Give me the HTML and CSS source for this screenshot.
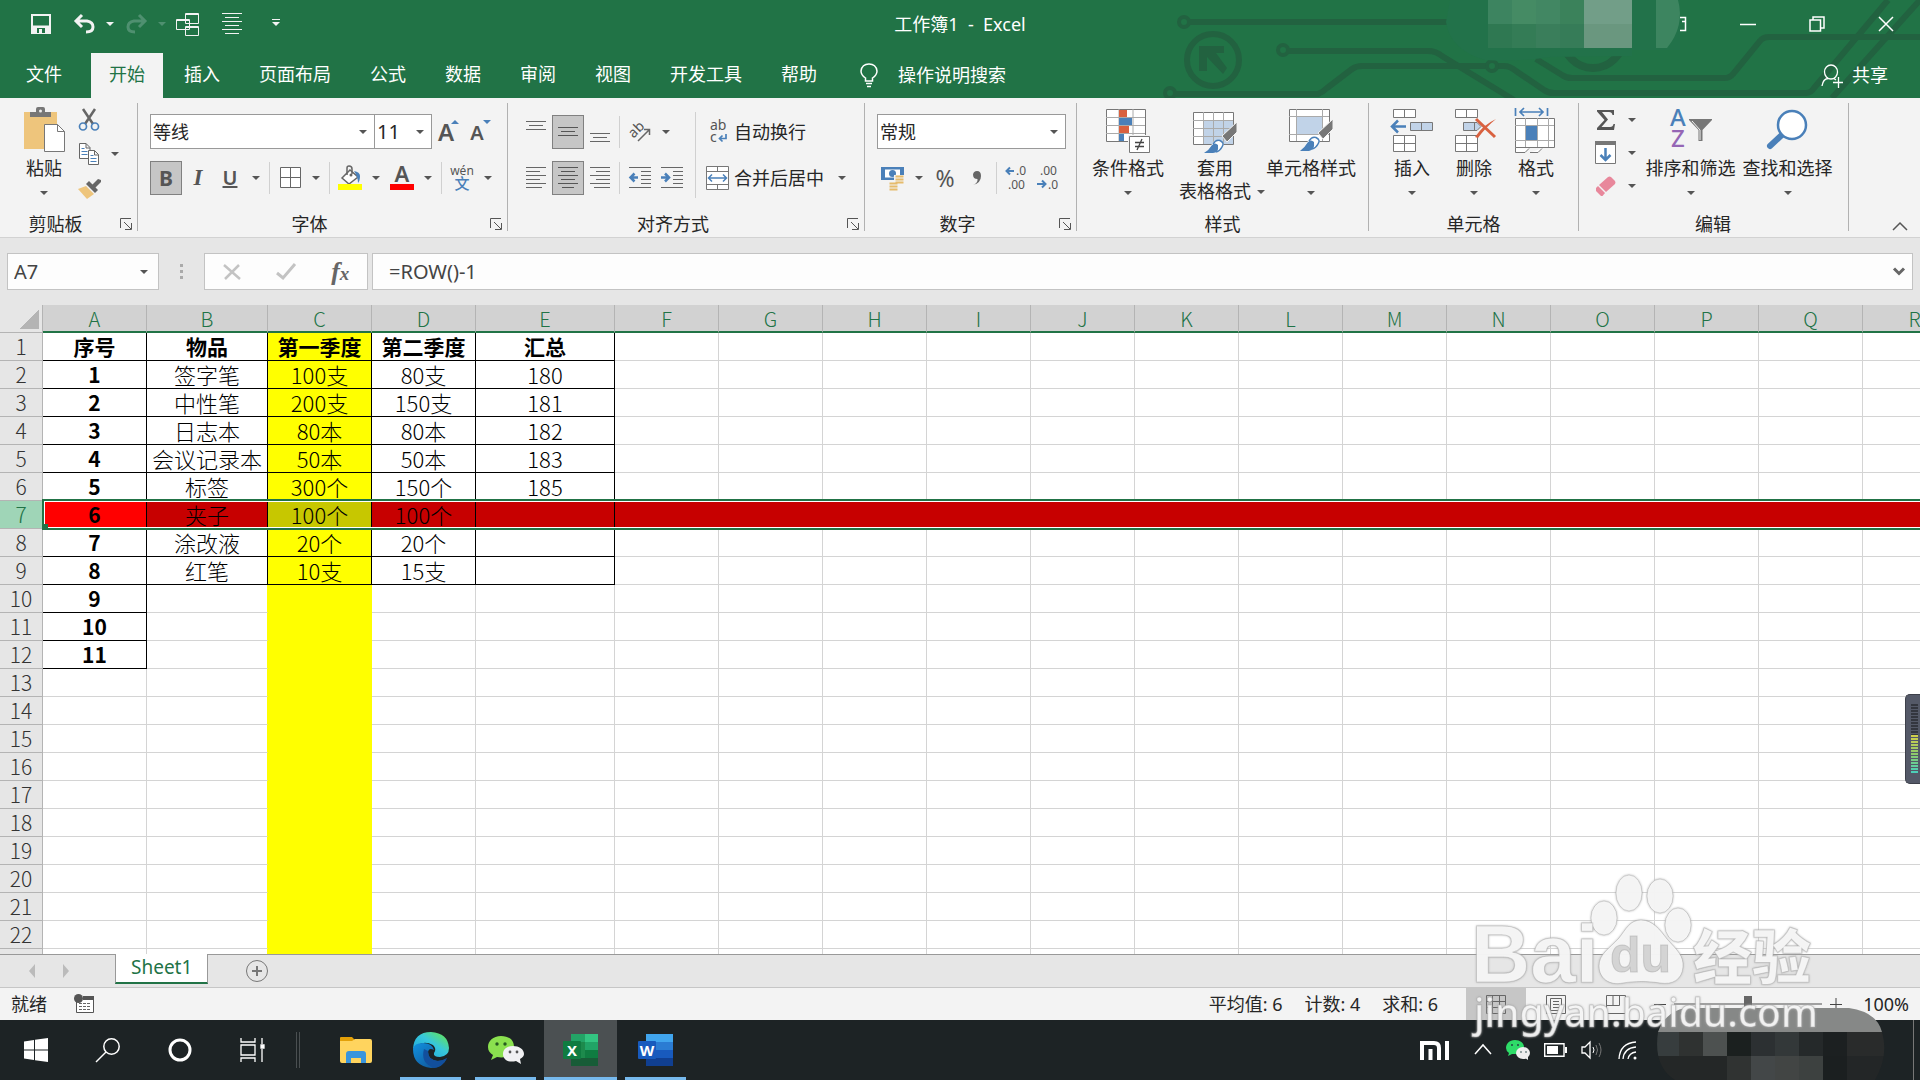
FILE: index.html
```html
<!DOCTYPE html>
<html lang="zh-CN">
    <head>
        <meta charset="utf-8">
        <meta name="viewport" content="width=device-width, initial-scale=1">
        <title>工作簿1 - Excel</title>
        <link rel="stylesheet" href="styles.css">
    </head>
    <body>
        <header class="app-header">
            <!--Circuit pattern in the right corner of the title bar-->
            <svg class="circuit" width="770" height="98" viewBox="0 0 770 98" aria-hidden="true">
                <g fill="none" stroke="#226240" stroke-width="6">
                    <circle cx="34" cy="22" r="5" stroke-width="4"/>
                    <path d="M40 22H300"/>
                    <circle cx="63" cy="60" r="26"/>
                    <circle cx="133" cy="50" r="5" stroke-width="4"/>
                    <path d="M139 51H278Q286 51 292 56L364 100"/>
                    <circle cx="20" cy="93" r="5" stroke-width="4"/>
                    <path d="M26 94H168Q173 92 177 88L202 69Q206 66 212 66H336M348 66H354Q360 66 366 71L394 90Q398 93 404 93H656Q661 93 664 88L738 0"/>
                    <circle cx="342" cy="66" r="5" stroke-width="4"/>
                    <circle cx="443" cy="38" r="30" stroke-width="8"/>
                    <path d="M386 59L412 75Q416 78 422 78H574Q580 78 583 74L610 41Q613 37 619 37H770M770 0L682 98"/>
                </g>
                <path fill="#226240" d="M49 46H74V53H66L77 68L73 74L57 57V71H49Z"/>
                <path fill="#22724a" d="M300 0H530V50H482V56L400 57Q370 62 335 60Q300 50 296 22Z"/>
                <path fill="#3d8460" d="M338 0h24v24h-24z"/><path fill="#458b64" d="M362 0h24v24h-24z"/>
                <path fill="#428763" d="M386 0h24v24h-24z"/><path fill="#3b825b" d="M410 0h24v24h-24z"/>
                <path fill="#729e88" d="M434 0h48v24h-48z"/><path fill="#2f7852" d="M338 24h24v24h-24z"/>
                <path fill="#347c56" d="M362 24h24v24h-24z"/><path fill="#3a7e5b" d="M386 24h24v24h-24z"/>
                <path fill="#367c58" d="M410 24h24v24h-24z"/><path fill="#6a977f" d="M434 24h48v24h-48z"/>
                <path fill="#3d8560" d="M506 0H528Q535 26 517 48H506z"/>
            </svg>

            <div class="title-bar">
                <div class="quick-access">
                    <button class="qa" aria-label="保存"><svg width="20" height="20" viewBox="0 0 20 20"><path d="M1 1H19V19H1Z" fill="none" stroke="#f3f3f3" stroke-width="2"/><path d="M2 11.500H18V18H2Z" fill="#f3f3f3"/><path d="M6 14h8v5H6z" fill="#217346"/><path d="M8 15h3v4H8z" fill="#f3f3f3"/></svg></button>
                    <button class="qa" aria-label="撤消"><svg width="23" height="20" viewBox="0 0 23 20" fill="none" stroke="#f3f3f3" stroke-width="3"><path d="M9 1L3 7L9 13M3 7H14Q20 8 20 13Q20 18 13 18"/></svg></button>
                    <button class="qa-more" aria-label="撤消列表"><i class="caret light"></i></button>
                    <button class="qa" aria-label="恢复" disabled><svg width="23" height="20" viewBox="0 0 23 20" fill="none" stroke="#4f9070" stroke-width="3"><path d="M14 1L20 7L14 13M20 7H9Q3 8 3 13Q3 18 10 18"/></svg></button>
                    <button class="qa-more" aria-label="恢复列表" disabled><i class="caret faint"></i></button>
                    <button class="qa" aria-label="切换窗口"><svg width="24" height="24" viewBox="0 0 24 24" fill="#217346" stroke="#f3f3f3"><path d="M9.500 1.500H22.500V11.500H9.500ZM9 2.500H23M.5 7.500H13.500V17.500H.5ZM0 8.500H14M9.500 14.500H22.500V23.500H9.500ZM9 15.500H23"/></svg></button>
                    <button class="qa wide" aria-label="居中"><svg width="20" height="22" viewBox="0 0 20 22" stroke="#f3f3f3"><path d="M0 .5H20M3 4.500H17M0 8.500H20M3 12.500H17M0 16.500H20M3 20.500H17"/></svg></button>
                    <button class="qa" aria-label="自定义快速访问工具栏"><i class="caret light barred"></i></button>
                </div>
                <h1 class="doc-title">工作簿1&nbsp; -&nbsp; Excel</h1>
                <div class="window-controls">
                    <button aria-label="功能区显示选项"><svg width="16" height="16" viewBox="0 0 16 16" fill="none" stroke="#fff" stroke-width="1.500"><path d="M9 1.500H14.500V14.500H9M11 5.500h3"/></svg></button>
                    <button aria-label="最小化"><svg width="16" height="16" viewBox="0 0 16 16" stroke="#fff" stroke-width="1.500"><path d="M0 8.500H16"/></svg></button>
                    <button aria-label="还原"><svg width="16" height="16" viewBox="0 0 16 16" fill="none" stroke="#fff" stroke-width="1.500"><path d="M1 4H11.500V15H1ZM4 4V1H15V12H12"/></svg></button>
                    <button aria-label="关闭"><svg width="16" height="16" viewBox="0 0 16 16" stroke="#fff" stroke-width="1.500"><path d="M1 1L15 15M15 1L1 15"/></svg></button>
                </div>
            </div>

            <nav class="tabs">
                <a href="#" class="tab file">文件</a>
                <a href="#" class="tab active">开始</a>
                <a href="#" class="tab">插入</a>
                <a href="#" class="tab">页面布局</a>
                <a href="#" class="tab">公式</a>
                <a href="#" class="tab">数据</a>
                <a href="#" class="tab">审阅</a>
                <a href="#" class="tab">视图</a>
                <a href="#" class="tab">开发工具</a>
                <a href="#" class="tab">帮助</a>
                <a href="#" class="tell-me"><svg width="18" height="25" viewBox="0 0 18 25" fill="none" stroke="#fff" stroke-width="1.500"><path d="M5.500 18V15Q1 12 1 8Q2 1 9 1Q16 1 17 8Q17 12 12.500 15V18ZM6 20.500h6M7 23.500h4"/></svg>操作说明搜索</a>
                <a href="#" class="share"><svg width="22" height="24" viewBox="0 0 22 24" fill="none" stroke="#fff" stroke-width="1.300"><ellipse cx="10" cy="8" rx="6.500" ry="7"/><path d="M1 22Q2 15 7 14.500M13 14.500L15 16M17.500 13V24M12 18.500H22"/></svg>共享</a>
            </nav>
        </header>

        <section class="ribbon">
            <div class="group clipboard">
                <div class="group-body">
                    <button class="big">
                        <svg width="44" height="48" viewBox="0 0 44 48"><path d="M2 7h33v37H2z" fill="#eec57c"/><path d="M8 12V7h6V4q0-2 2-2h5q2 0 2 2v3h6v5z" fill="#777"/><circle cx="18.500" cy="6" r="1.500" fill="#eee"/><path d="M22.500 19.500H35.500L42.500 26.500V46.500H22.500Z" fill="#fff" stroke="#777"/><path d="M35.500 19.500V26.500H42.500" fill="none" stroke="#777"/></svg>
                        <span>粘贴</span><i class="caret"></i>
                    </button>
                    <div class="stack">
                        <div><button class="tool" aria-label="剪切"><svg width="20" height="22" viewBox="0 0 20 22" fill="none"><path d="M4 0L14 15M16 0L6 15" stroke="#666" stroke-width="2.500"/><circle cx="4" cy="17.500" r="3.500" stroke="#4a80b9" stroke-width="1.700"/><circle cx="16" cy="17.500" r="3.500" stroke="#4a80b9" stroke-width="1.700"/></svg></button></div>
                        <div><button class="tool" aria-label="复制"><svg width="20" height="22" viewBox="0 0 20 22"><g fill="#fff" stroke="#666"><path d="M.5.500H7L11 4.500V15.500H.5ZM7 .5V5H11"/><path d="M9.500 7.500H15.500L19.500 11.500V21.500H9.500ZM15.500 7.500V12H19.500"/></g><path d="M2.500 5.500h3m-3 3h6m-6 3h6M11.500 12.500h3m-3 3h6m-6 3h6" stroke="#4a80b9"/></svg></button><button class="more" aria-label="复制选项"><i class="caret"></i></button></div>
                        <div><button class="tool" aria-label="格式刷"><svg width="23" height="21" viewBox="0 0 23 21"><path d="M0 11L8 8L16 16L9 21Z" fill="#eec57c"/><path d="M8 6L11 3L20 12L17 15Z" fill="#666"/><path d="M14 7L20 1L23 2V4L17 10Z" fill="#666"/></svg></button></div>
                    </div>
                </div>
                <div class="group-label">剪贴板<button class="launcher" aria-label="剪贴板设置"><svg width="12" height="12" viewBox="0 0 12 12" fill="none" stroke="#555"><path d="M.5 10V.5H11M4 4L11 11M11.500 5V11.500H5"/></svg></button></div>
            </div>

            <div class="group font">
                <div class="group-body rows">
                    <div class="row">
                        <label class="combo family"><select aria-label="字体"><option>等线</option></select><i class="caret"></i></label>
                        <label class="combo size"><select aria-label="字号"><option>11</option></select><i class="caret"></i></label>
                        <button class="tool" aria-label="增大字号"><span class="grow">A</span><i class="mark up"></i></button>
                        <button class="tool" aria-label="减小字号"><span class="shrink">A</span><i class="mark down"></i></button>
                    </div>
                    <div class="row">
                        <button class="tool on bold">B</button>
                        <button class="tool italic">I</button>
                        <button class="tool underline">U</button>
                        <button class="more" aria-label="下划线选项"><i class="caret"></i></button>
                        <i class="sep"></i>
                        <button class="tool" aria-label="边框"><svg width="21" height="21" viewBox="0 0 21 21"><path d="M.5.500H20.500V20.500H.5ZM10.500 0V21M0 10.500H21" fill="#fff" stroke="#666"/></svg></button>
                        <button class="more" aria-label="边框选项"><i class="caret"></i></button>
                        <i class="sep"></i>
                        <button class="tool" aria-label="填充颜色"><svg width="24" height="24" viewBox="0 0 24 24"><path d="M4 12L12 4L20 11L11 18Z" fill="#fff" stroke="#666" stroke-width="1.500"/><path d="M9 9V2q0-2 2-2q3 0 3 3v5" fill="none" stroke="#666" stroke-width="1.500"/><circle cx="13" cy="9" r="1.500" fill="#666"/><path d="M16 5Q22 6 22 10Q22 15 20 17Q20 11 16 5Z" fill="#4a80b9"/><path d="M0 18h24v6H0z" fill="#ff0"/></svg></button>
                        <button class="more" aria-label="填充选项"><i class="caret"></i></button>
                        <button class="tool color" aria-label="字体颜色">A</button>
                        <button class="more" aria-label="字体颜色选项"><i class="caret"></i></button>
                        <i class="sep"></i>
                        <button class="tool phonetic" aria-label="拼音指南"><span>wén</span><b>文</b></button>
                        <button class="more" aria-label="拼音选项"><i class="caret"></i></button>
                    </div>
                </div>
                <div class="group-label">字体<button class="launcher" aria-label="字体设置"><svg width="12" height="12" viewBox="0 0 12 12" fill="none" stroke="#555"><path d="M.5 10V.5H11M4 4L11 11M11.500 5V11.500H5"/></svg></button></div>
            </div>

            <div class="group align">
                <div class="group-body">
                    <div class="rows">
                        <div class="row">
                            <button class="tool" aria-label="顶端对齐"><svg width="20" height="22" viewBox="0 0 20 22" stroke="#666"><path d="M0 .5H20M3 4.500H17M0 8.500H20"/></svg></button>
                            <button class="tool on" aria-label="垂直居中"><svg width="20" height="22" viewBox="0 0 20 22" stroke="#555"><path d="M0 6.500H20M3 10.500H17M0 14.500H20"/></svg></button>
                            <button class="tool" aria-label="底端对齐"><svg width="20" height="22" viewBox="0 0 20 22" stroke="#666"><path d="M0 12.500H20M3 16.500H17M0 20.500H20"/></svg></button>
                            <i class="sep"></i>
                            <button class="tool" aria-label="方向"><svg width="22" height="22" viewBox="0 0 22 22"><text class="icon-text" x="1" y="15" transform="rotate(-45 6 12)">ab</text><path d="M9 20L20 9M15 8.500H20.500V14" fill="none" stroke="#666" stroke-width="1.500"/></svg></button>
                            <button class="more" aria-label="方向选项"><i class="caret"></i></button>
                        </div>
                        <div class="row">
                            <button class="tool" aria-label="左对齐"><svg width="20" height="22" viewBox="0 0 20 22" stroke="#666"><path d="M0 .5H20M0 4.500H14M0 8.500H20M0 12.500H14M0 16.500H20M0 20.500H16"/></svg></button>
                            <button class="tool on" aria-label="居中"><svg width="20" height="22" viewBox="0 0 20 22" stroke="#555"><path d="M0 .5H20M3 4.500H17M0 8.500H20M3 12.500H17M0 16.500H20M4 20.500H16"/></svg></button>
                            <button class="tool" aria-label="右对齐"><svg width="20" height="22" viewBox="0 0 20 22" stroke="#666"><path d="M0 .5H20M6 4.500H20M0 8.500H20M6 12.500H20M0 16.500H20M4 20.500H20"/></svg></button>
                            <i class="sep"></i>
                            <button class="tool" aria-label="减少缩进"><svg width="22" height="22" viewBox="0 0 22 22" fill="none" stroke="#666"><path d="M0 .5H22M12 4.500H22M12 8.500H22M12 12.500H22M12 16.500H22M0 20.500H22"/><path d="M9 10.500H2M5.500 6.500L1.500 10.500L5.500 14.500" stroke="#4a80b9" stroke-width="2.500"/></svg></button>
                            <button class="tool" aria-label="增加缩进"><svg width="22" height="22" viewBox="0 0 22 22" fill="none" stroke="#666"><path d="M0 .5H22M12 4.500H22M12 8.500H22M12 12.500H22M12 16.500H22M0 20.500H22"/><path d="M0 10.500H7M4 6.500L8 10.500L4 14.500" stroke="#4a80b9" stroke-width="2.500"/></svg></button>
                        </div>
                    </div>
                    <i class="sep tall"></i>
                    <div class="rows">
                        <div class="row">
                            <button class="text-tool"><svg width="24" height="24" viewBox="0 0 24 24"><text class="icon-text" x="4" y="10">ab</text><text class="icon-text" x="4" y="22">c</text><path d="M20 14V18.500H14M16.500 15.500L13.500 18.500L16.500 21.500" fill="none" stroke="#4a80b9" stroke-width="1.700"/></svg>自动换行</button>
                        </div>
                        <div class="row">
                            <button class="text-tool"><svg width="24" height="24" viewBox="0 0 24 24"><path d="M.5.500H22.500V23.500H.5ZM11.500 0V6M11.500 18V24M0 5.500H23M0 18.500H23" fill="#fff" stroke="#777"/><path d="M3 12H20M6 8.500L2.500 12L6 15.500M17 8.500L20.500 12L17 15.500" fill="none" stroke="#4a80b9" stroke-width="1.500"/></svg>合并后居中</button>
                            <button class="more" aria-label="合并选项"><i class="caret"></i></button>
                        </div>
                    </div>
                </div>
                <div class="group-label">对齐方式<button class="launcher" aria-label="对齐设置"><svg width="12" height="12" viewBox="0 0 12 12" fill="none" stroke="#555"><path d="M.5 10V.5H11M4 4L11 11M11.500 5V11.500H5"/></svg></button></div>
            </div>

            <div class="group number">
                <div class="group-body rows">
                    <div class="row">
                        <label class="combo format"><select aria-label="数字格式"><option>常规</option></select><i class="caret"></i></label>
                    </div>
                    <div class="row">
                        <button class="tool" aria-label="会计数字格式"><svg width="24" height="24" viewBox="0 0 24 24"><path d="M0 1h23v13H0z" fill="#4a80b9"/><path d="M4 3.500H19V11.500H4Z" fill="#fff"/><circle cx="11.500" cy="7.500" r="3.500" fill="#4a80b9"/><path d="M13 9h10v10h-6v5H8v-8h5z" fill="#f3f3f3"/><path d="M14.500 10.500h8m-8 3h8m-8 3h8M8.500 17.500h8m-8 3h8m-8 3h8" stroke="#e6bb6c" stroke-width="2"/></svg></button>
                        <button class="more" aria-label="会计格式选项"><i class="caret"></i></button>
                        <button class="tool percent">%</button>
                        <button class="tool" aria-label="千位分隔样式"><svg width="10" height="16" viewBox="0 0 10 16"><path d="M1 15Q6 13 5.500 9Q1 9 1 4.500Q1.500 1 5 1Q9 1 9 6Q9 13 1 15Z" fill="#666"/></svg></button>
                        <i class="sep"></i>
                        <button class="tool" aria-label="增加小数位数"><svg width="24" height="24" viewBox="0 0 24 24"><text class="icon-text small" x="11" y="9">.0</text><text class="icon-text small" x="3" y="23">.00</text><path d="M9 5H2M5 1.500L1.500 5L5 8.500" fill="none" stroke="#4a80b9" stroke-width="2"/></svg></button>
                        <button class="tool" aria-label="减少小数位数"><svg width="24" height="24" viewBox="0 0 24 24"><text class="icon-text small" x="3" y="9">.00</text><text class="icon-text small" x="11" y="23">.0</text><path d="M0 18H8M5 14.500L8.500 18L5 21.500" fill="none" stroke="#4a80b9" stroke-width="2"/></svg></button>
                    </div>
                </div>
                <div class="group-label">数字<button class="launcher" aria-label="数字设置"><svg width="12" height="12" viewBox="0 0 12 12" fill="none" stroke="#555"><path d="M.5 10V.5H11M4 4L11 11M11.500 5V11.500H5"/></svg></button></div>
            </div>

            <div class="group styles">
                <div class="group-body">
                    <button class="big">
                        <svg width="46" height="48" viewBox="0 0 46 48"><path d="M1.500 4.500H40.500V36.500H1.500Z" fill="#fff" stroke="#777"/><path d="M14 4V36M28 4V36M1 12.500H40M1 20.500H40M1 28.500H40" stroke="#aaa"/><path d="M14 5h8v7h-8zM14 21h10v7H14z" fill="#d9613f"/><path d="M14 13h13v7H14zM14 29h5v7h-5z" fill="#4a80b9"/><path d="M23 30h22v18H23z" fill="#f3f3f3"/><path d="M24.500 31.500H44.500V47.500H24.500Z" fill="#fff" stroke="#777"/><path d="M30 37.500h9M30 41.500h9M37 34L32 45" stroke="#444" stroke-width="1.300"/></svg>
                        <span>条件格式</span><i class="caret"></i>
                    </button>
                    <button class="big table-style">
                        <svg width="46" height="48" viewBox="0 0 46 48"><path d="M1.500 7.500H41.500V39.500H1.500Z" fill="#fff" stroke="#777"/><path d="M11 16h30v23H11z" fill="#c1d3e8"/><path d="M11.500 7V39M21.500 7V39M31.500 7V39M1 15.500H41M1 23.500H41M1 31.500H41" stroke="#aaa"/><path d="M45 17V27L35 37L30 31Z" fill="#777" stroke="#f3f3f3"/><path d="M13 48Q17 44 20 39Q23 34 28 35Q33 37 31 42Q28 48 20 48Z" fill="#fff"/><path d="M12 48Q17 45 20 40Q23 37 26 40Q27 48 21 48Z" fill="#4a80b9"/><path d="M21 39Q24 34 28 35.500Q33 38 30 42Q28 46 24 47" fill="none" stroke="#4a80b9" stroke-width="1.500"/></svg>
                        <span>套用<br>表格格式<i class="caret"></i></span>
                    </button>
                    <button class="big">
                        <svg width="46" height="48" viewBox="0 0 46 48"><path d="M1.500 4.500H41.500V36.500H1.500Z" fill="#fff" stroke="#777"/><path d="M8 11h27v19H8z" fill="#c1d3e8"/><path d="M8.500 4V36M34.500 4V36M1 11.500H41M1 29.500H41" stroke="#aaa" fill="none"/><path d="M45 14V24L35 34L30 28Z" fill="#777" stroke="#f3f3f3"/><path d="M13 46Q17 41 20 36Q23 31 28 32Q33 34 31 39Q28 45 20 46Z" fill="#fff"/><path d="M12 46Q17 42 20 37Q23 34 26 37Q27 45 21 46Z" fill="#4a80b9"/><path d="M21 36Q24 31 28 32.500Q33 35 30 39Q28 43 24 44" fill="none" stroke="#4a80b9" stroke-width="1.500"/></svg>
                        <span>单元格样式</span><i class="caret"></i>
                    </button>
                </div>
                <div class="group-label">样式</div>
            </div>

            <div class="group cells">
                <div class="group-body">
                    <button class="big">
                        <svg width="46" height="48" viewBox="0 0 46 48"><path d="M4.500 4.500H26.500V12.500H4.500ZM15.500 4V12M4.500 30.500H26.500V46.500H4.500ZM15.500 30V46M4 38.500H27" fill="#fff" stroke="#777"/><path d="M21.500 17.500H43.500V25.500H21.500ZM32.500 17V25" fill="#c1d3e8" stroke="#777"/><path d="M17 21.500H3M9 15.500L3 21.500L9 27.500" fill="none" stroke="#4a80b9" stroke-width="2.500"/></svg>
                        <span>插入</span><i class="caret"></i>
                    </button>
                    <button class="big">
                        <svg width="46" height="48" viewBox="0 0 46 48"><path d="M4.500 4.500H26.500V12.500H4.500ZM15.500 4V12M4.500 30.500H26.500V46.500H4.500ZM15.500 30V46M4 38.500H27" fill="#fff" stroke="#777"/><path d="M12.500 17.500H26L30 21.500L26 25.500H12.500ZM23.500 17V25" fill="#c1d3e8" stroke="#777"/><path d="M25 14L44 32" stroke="#d9613f" stroke-width="3"/><path d="M24 32Q32 20 45 14Q35 22 27 33Z" fill="#d9613f"/></svg>
                        <span>删除</span><i class="caret"></i>
                    </button>
                    <button class="big">
                        <svg width="46" height="48" viewBox="0 0 46 48"><path d="M2.500 13.500H41.500V42.500H2.500ZM2.500 42.500V47.500H12L16 43.500M17 47.500H25L29 43.500" fill="#fff" stroke="#777"/><path d="M12.500 13V42M24.500 13V42M35.500 13V42M2 20.500H41M2 35.500H41" stroke="#aaa"/><path d="M13 21h11v14H13z" fill="#4a80b9"/><path d="M2.500 3v8M34.500 3v8M7 7H30M11 3L7 7L11 11M26 3L30 7L26 11" fill="none" stroke="#4a80b9" stroke-width="1.700"/></svg>
                        <span>格式</span><i class="caret"></i>
                    </button>
                </div>
                <div class="group-label">单元格</div>
            </div>

            <div class="group editing">
                <div class="group-body">
                    <div class="stack">
                        <div><button class="tool" aria-label="自动求和"><svg width="20" height="20" viewBox="0 0 20 20"><path d="M1 0H18V5H16.500Q16 2 13 2H6L12 9.500L5.500 17H14Q17 17 17.500 14H19L18 20H1V18L8.500 10L1 1.500Z" fill="#555"/></svg></button><button class="more" aria-label="求和选项"><i class="caret"></i></button></div>
                        <div><button class="tool" aria-label="填充"><svg width="22" height="23" viewBox="0 0 22 23"><path d="M.5.500H20.500V22.500H.5Z" fill="#fff" stroke="#777"/><path d="M0 0h21v4H0z" fill="#777"/><path d="M10.500 7V19M5.500 14L10.500 19L15.500 14" fill="none" stroke="#4a80b9" stroke-width="2.500"/></svg></button><button class="more" aria-label="填充选项"><i class="caret"></i></button></div>
                        <div><button class="tool" aria-label="清除"><svg width="22" height="20" viewBox="0 0 22 20"><path d="M13 1Q14.500 0 16 1L20 5Q21 6.500 20 8L11 16L4 9Z" fill="#e8879b"/><path d="M3 10L10 17L7.500 20H6L1 15V12Z" fill="#e8879b"/></svg></button><button class="more" aria-label="清除选项"><i class="caret"></i></button></div>
                    </div>
                    <button class="big">
                        <svg width="46" height="48" viewBox="0 0 46 48"><text class="sort-a" x="2" y="21">A</text><text class="sort-z" x="3" y="42">Z</text><path d="M21 14H44V15L34.500 25V36H30.500V25L21 15Z" fill="#777"/><path d="M24 16L32 25V35" fill="none" stroke="#f3f3f3"/></svg>
                        <span>排序和筛选</span><i class="caret"></i>
                    </button>
                    <button class="big">
                        <svg width="46" height="48" viewBox="0 0 46 48"><path d="M5 41L20 27" stroke="#4a80b9" stroke-width="6" stroke-linecap="round"/><circle cx="27" cy="20" r="14" fill="#fff" stroke="#4a80b9" stroke-width="2.500"/></svg>
                        <span>查找和选择</span><i class="caret"></i>
                    </button>
                </div>
                <div class="group-label">编辑</div>
            </div>
            <button class="collapse" aria-label="折叠功能区"><svg width="16" height="10" viewBox="0 0 16 10" fill="none" stroke="#555" stroke-width="1.500"><path d="M1 9L8 2L15 9"/></svg></button>
        </section>

        <section class="formula-bar">
            <div class="name-box"><input type="text" value="A7" aria-label="名称框"><i class="caret"></i></div>
            <i class="grip"></i>
            <div class="formula-buttons">
                <button aria-label="取消"><svg width="18" height="16" viewBox="0 0 18 16" stroke="#c3c3c3" stroke-width="2.500"><path d="M1 1L17 15M16 1L2 15"/></svg></button>
                <button aria-label="输入"><svg width="20" height="17" viewBox="0 0 20 17" fill="none" stroke="#c3c3c3" stroke-width="3"><path d="M1 10L7 15L19 1"/></svg></button>
                <button class="fx" aria-label="插入函数">f<sub>x</sub></button>
            </div>
            <div class="formula-input"><input type="text" value="=ROW()-1" aria-label="编辑栏"><svg width="12" height="9" viewBox="0 0 12 9" fill="none" stroke="#666" stroke-width="3"><path d="M1 1.500L6 6.500L11 1.500"/></svg></div>
        </section>

        <main class="sheet">
            <table class="grid" id="grid">
                <colgroup>
                    <col class="col-head"><col class="col-a"><col class="col-b"><col class="col-c"><col class="col-d"><col class="col-e">
                </colgroup>
            </table>
            <div class="selection"></div>
            <div class="meter"><i class="idle"></i><i class="level"></i></div>
        </main>

        <div class="sheet-tabs">
            <button class="nav prev" aria-label="上一个工作表"></button>
            <button class="nav next" aria-label="下一个工作表"></button>
            <a href="#" class="sheet-tab">Sheet1</a>
            <button class="add" aria-label="新工作表"><svg width="24" height="24" viewBox="0 0 24 24" fill="none" stroke="#777"><circle cx="12" cy="12" r="10.500"/><path d="M12 7V17M7 12H17" stroke-width="2"/></svg></button>
        </div>

        <footer class="status-bar">
            <span>就绪</span>
            <button class="macro" aria-label="录制宏"><svg width="21" height="20" viewBox="0 0 21 20"><path d="M2.500 4V18.500H19.500V3" fill="#fff" stroke="#555"/><path d="M9 2h11v4H9z" fill="#555"/><circle cx="4.500" cy="4.500" r="4.500" fill="#555"/><path d="M5 9.500h12M5 12.500h12M5 15.500h12" stroke="#666" stroke-dasharray="3 1"/></svg></button>
            <div class="totals"><span>平均值: 6</span><span>计数: 4</span><span>求和: 6</span></div>
            <div class="views">
                <button class="on" aria-label="普通"><svg width="20" height="19" viewBox="0 0 20 19" fill="none" stroke="#666"><path d="M.5.500H19.500V18.500H.5ZM6.500 0V19M13.500 0V19M0 6.500H20M0 12.500H20"/></svg></button>
                <button aria-label="页面布局"><svg width="20" height="19" viewBox="0 0 20 19" fill="none" stroke="#666"><path d="M.5.500H19.500V18.500H.5ZM4.500 3.500H15.500V15.500H4.500ZM7 6.500h6M7 9.500h6M7 12.500h6"/></svg></button>
                <button aria-label="分页预览"><svg width="20" height="19" viewBox="0 0 20 19" fill="none" stroke="#666"><path d="M.5.500H19.500V18.500H.5ZM.5 10.500H13.500V0M7 0V10"/></svg></button>
            </div>
            <div class="zoom">
                <button aria-label="缩小"><svg width="12" height="12" viewBox="0 0 12 12" stroke="#444"><path d="M0 6.500H12"/></svg></button>
                <input type="range" min="0" max="100" value="50" aria-label="缩放">
                <button aria-label="放大"><svg width="12" height="12" viewBox="0 0 12 12" stroke="#444"><path d="M0 6.500H12M6 0V12"/></svg></button>
                <span>100%</span>
            </div>
        </footer>

        <div class="taskbar">
            <button class="start" aria-label="开始"><svg width="24" height="24" viewBox="0 0 24 24" fill="#fff"><path d="M0 3.500L10 2V11.500H0ZM11 1.800L24 0V11.500H11ZM0 12.500H10V22L0 20.500ZM11 12.500H24V24L11 22.200Z"/></svg></button>
            <button aria-label="搜索"><svg width="24" height="24" viewBox="0 0 24 24" fill="none" stroke="#fff" stroke-width="1.500"><circle cx="15.500" cy="8.500" r="7.700"/><path d="M10 14L0 24"/></svg></button>
            <button aria-label="Cortana"><svg width="24" height="24" viewBox="0 0 24 24" fill="none" stroke="#fff" stroke-width="3"><circle cx="12" cy="12" r="10"/></svg></button>
            <button aria-label="任务视图"><svg width="24" height="24" viewBox="0 0 24 24" fill="none" stroke="#fff" stroke-width="1.300"><path d="M1 0V4H15V0M1 7H15V17H1ZM1 24V20H15V24M22 0V6M22 11V24"/><path d="M21 7h3v3h-3z" fill="#fff"/></svg></button>
            <i class="divider"></i>
            <button class="app" aria-label="文件资源管理器"><svg width="36" height="36" viewBox="0 0 36 36"><path d="M2 6Q2 5 3 5H14L17 8H32V14H2Z" fill="#e3a008"/><path d="M2 9H14L17 7H32Q34 7 34 9V29Q34 31 32 31H4Q2 31 2 29Z" fill="#ffd45e"/><path d="M8 22Q8 19 11 19H25Q28 19 28 22V31H23V26H13V31H8Z" fill="#3a95dd"/></svg></button>
            <button class="app open" aria-label="Edge"><svg width="38" height="38" viewBox="0 0 38 38"><defs><linearGradient id="edge-top" x1="0" y1="1" x2="1" y2="0"><stop offset="0" stop-color="#1ba2dd"/><stop offset=".55" stop-color="#37c7dc"/><stop offset="1" stop-color="#6bea3e"/></linearGradient><linearGradient id="edge-low" x1="0" y1="0" x2="1" y2="1"><stop offset="0" stop-color="#1192e0"/><stop offset="1" stop-color="#114a8b"/></linearGradient></defs><path d="M1 18Q2 1 19 1Q36 2 37 17Q37 25 28 26Q21 26 22 22Q25 18 21 14Q10 8 1 18Z" fill="url(#edge-top)"/><path d="M1 18Q2 12 11 12Q20 12 22 19Q17 16 16 21Q16 29 26 30Q32 30 35 27Q31 37 19 37Q1 35 1 18Z" fill="url(#edge-low)"/><path d="M12 18Q8 32 22 37Q31 36 35 27Q30 30 25 30Q16 29 16 20Z" fill="#124f9d"/></svg></button>
            <button class="app open" aria-label="微信"><svg width="36" height="32" viewBox="0 0 36 32"><path d="M13 2C5 2 0 7 0 13C0 17 2 19 5 21L3 26L9 23C19 25 26 20 26 13C26 6 21 2 13 2Z" fill="#8be14f"/><path d="M25 12C18 12 15 16 15 20C15 26 21 29 28 27L33 30L32 25C35 23 36 22 36 20C36 15 31 12 25 12Z" fill="#f1f1f3"/><g fill="#275c20"><circle cx="9" cy="10" r="1.700"/><circle cx="17" cy="10" r="1.700"/></g><g fill="#555"><circle cx="22" cy="18" r="1.400"/><circle cx="29" cy="18" r="1.400"/></g></svg></button>
            <button class="app open current" aria-label="Excel"><svg width="36" height="34" viewBox="0 0 36 34"><path d="M8 1h27v32H8z" fill="#1d8a4c"/><path d="M8 1h14v8H8z" fill="#23a366"/><path d="M22 1h13v8H22z" fill="#33c481"/><path d="M22 9h13v8H22z" fill="#21a366"/><path d="M22 17h13v8H22z" fill="#107c41"/><path d="M8 25h27v8H8z" fill="#185c37"/><rect y="8" width="18" height="18" rx="1" fill="#107c41"/><text class="tile-text" x="9" y="23">X</text></svg></button>
            <button class="app open" aria-label="Word"><svg width="36" height="34" viewBox="0 0 36 34"><path d="M8 1h27v8H8z" fill="#41a5ee"/><path d="M8 9h27v8H8z" fill="#2b7cd3"/><path d="M8 17h27v8H8z" fill="#185abd"/><path d="M8 25h27v8H8z" fill="#103f91"/><rect y="8" width="18" height="18" rx="1" fill="#185abd"/><text class="tile-text" x="9" y="23">W</text></svg></button>

            <div class="tray">
                <svg width="30" height="20" viewBox="0 0 30 20" fill="none" stroke="#fff" stroke-width="4"><path d="M2 20V3H14Q19 3 19 8V20M27 1V20M10.500 9V20"/></svg>
                <svg width="18" height="12" viewBox="0 0 18 12" fill="none" stroke="#fff" stroke-width="1.500"><path d="M1 10L9 1L17 10"/></svg>
                <svg width="24" height="20" viewBox="0 0 24 20"><path d="M9 0C3 0 0 4 0 8Q0 11 3 13L2 16L6 14Q18 15 18 7C18 3 14 0 9 0Z" fill="#2edc68"/><ellipse cx="17" cy="13" rx="7" ry="6" fill="#eee"/><path d="M19 18l3 2v-4z" fill="#eee"/><g fill="#244"><circle cx="6" cy="5" r="1"/><circle cx="12" cy="5" r="1"/><circle cx="15" cy="12" r=".8"/><circle cx="20" cy="12" r=".8"/></g></svg>
                <svg width="23" height="14" viewBox="0 0 23 14"><path d="M.7.700H20V13.300H.7Z" fill="none" stroke="#fff" stroke-width="1.400"/><path d="M3 3h11v8H3zM21 4h2v6h-2z" fill="#fff"/></svg>
                <svg width="23" height="18" viewBox="0 0 23 18" fill="none" stroke="#fff"><path d="M1 6H4L9 1V17L4 12H1Z" stroke-width="1.300"/><path d="M12 6Q14 9 12 12"/><path d="M15 4Q18 9 15 14M18 2Q22 9 18 16" stroke="#777"/></svg>
                <svg width="19" height="19" viewBox="0 0 19 19" fill="none" stroke="#fff" stroke-width="1.300"><path d="M1 18Q2 2 18 1M5 18Q6 7 18 6M10 18Q11 12 18 11"/><circle cx="17" cy="17" r="1.500" fill="#fff" stroke="none"/></svg>
            </div>
            <i class="show-desktop"></i>
            <svg class="mask" width="228" height="72" viewBox="0 0 228 72" aria-hidden="true">
                <clipPath id="mask-shape"><path d="M28 0H192Q220 4 225 24Q232 48 218 72H18Q-4 58 1 24Q8 4 28 0Z"/></clipPath>
                <g clip-path="url(#mask-shape)">
                    <path d="M0 0h228v24H0z" fill="#868887"/><path d="M0 24h22v24H0z" fill="#373d3e"/>
                    <path d="M22 24h24v24H22z" fill="#2f3231"/><path d="M46 24h24v24H46z" fill="#4d5150"/>
                    <path d="M70 24h24v24H70z" fill="#1b201f"/><path d="M94 24h24v24H94z" fill="#2c3032"/>
                    <path d="M118 24h24v24h-24z" fill="#333839"/><path d="M142 24h24v24h-24z" fill="#25292a"/>
                    <path d="M166 24h24v24h-24z" fill="#1c2021"/><path d="M190 24h38v24h-38z" fill="#292b2b"/>
                    <path d="M0 48h70v24H0z" fill="#242727"/><path d="M70 48h24v24H70z" fill="#303332"/>
                    <path d="M94 48h24v24H94z" fill="#434748"/><path d="M118 48h24v24h-24z" fill="#424544"/>
                    <path d="M142 48h24v24h-24z" fill="#3d4140"/><path d="M166 48h24v24h-24z" fill="#1b1f20"/>
                    <path d="M190 48h38v24h-38z" fill="#232627"/>
                </g>
            </svg>
        </div>

        <!--Site logo laid over the bottom right corner-->
        <svg class="watermark" width="350" height="170" viewBox="0 0 350 170">
            <g class="logo">
                <ellipse cx="134" cy="48" rx="13" ry="17"/>
                <ellipse cx="159" cy="23" rx="13" ry="18"/>
                <ellipse cx="190" cy="26" rx="13" ry="17"/>
                <ellipse cx="208" cy="55" rx="13" ry="17"/>
                <path d="M171 50C183 50 190 60 197 69C207 80 214 86 213 97C212 110 202 115 190 113C177 111 165 111 153 113C139 116 129 108 129 96C129 84 139 79 149 68C156 59 160 50 171 50Z"/>
                <text class="logo-text" x="1" y="112">Bai</text>
                <text class="logo-du" x="140" y="102">du</text>
                <text class="logo-cn" x="223" y="109">经验</text>
            </g>
            <text class="logo-url" x="4" y="157">jingyan.baidu.com</text>
        </svg>
        <script src="script.js"></script>
    </body>
</html>
```

FILE: styles.css
```css
html {
    box-sizing: border-box;
}

*, *:before, *:after {
    box-sizing: inherit;
}

body {
    margin: 0;
    height: 100vh;
    display: flex;
    flex-direction: column;
    position: relative;
    overflow: hidden;
    background-color: #e6e6e6;
    color: #262626;
    font-family: "Noto Sans", "Noto Sans CJK SC", sans-serif;
    font-size: 18px;
    line-height: 24px;
}

button, input, select {
    margin: 0;
    padding: 0;
    border: 0;
    background: none;
    color: inherit;
    font: inherit;
}

a {
    color: inherit;
    text-decoration: none;
}

svg {
    display: block;
    flex: none;
    overflow: visible;
}

/*Small down arrow used all over the ribbon*/
.caret {
    display: inline-block;
    flex: none;
    border: 4px solid transparent;
    border-top-color: #555;
    border-bottom: 0;
}

.caret.light {
    border-top-color: #f3f3f3;
}

.caret.faint {
    border-top-color: #4f9070;
}

.caret.barred {
    position: relative;
}

.caret.barred:before {
    content: "";
    position: absolute;
    left: -4px;
    top: -7px;
    width: 8px;
    height: 1px;
    background-color: #f3f3f3;
}

/*Title bar and tabs*/
.app-header {
    position: relative;
    flex: none;
    background-color: #217346;
    color: #fff;
}

.circuit {
    position: absolute;
    top: 0;
    right: 0;
    overflow: hidden;
}

.title-bar {
    position: relative;
    display: grid;
    grid-template-columns: 1fr auto 1fr;
    align-items: center;
    height: 53px;
    padding-bottom: 5px;
}

.quick-access {
    display: flex;
    align-items: center;
    padding-left: 21px;
}

.qa, .qa-more {
    display: flex;
    justify-content: center;
    align-items: center;
    width: 40px;
    height: 40px;
}

.qa:nth-child(2) {
    margin-left: 3px;
}

.qa-more {
    width: 12px;
}

.qa.wide {
    width: 48px;
}

.doc-title {
    margin: 0;
    font-size: 18px;
    font-weight: normal;
}

.window-controls {
    display: flex;
    justify-content: flex-end;
}

.window-controls button {
    display: flex;
    justify-content: center;
    align-items: center;
    width: 69px;
    height: 40px;
}

.tabs {
    position: relative;
    display: flex;
    gap: 3px;
    height: 45px;
    line-height: 43px;
}

.tab {
    padding: 0 18px;
}

.tab.file {
    width: 88px;
    padding: 0 26px;
}

.tab.active {
    background-color: #f3f3f3;
    color: #217346;
}

.tell-me, .share {
    display: flex;
    align-items: center;
    gap: 20px;
    margin-left: 22px;
}

.share {
    gap: 9px;
    margin-left: auto;
    margin-right: 32px;
}

/*Ribbon*/
.ribbon {
    display: flex;
    flex: none;
    height: 140px;
    padding: 5px 0 6px;
    background-color: #f3f3f3;
    border-bottom: 1px solid #d2d2d2;
}

.group {
    display: flex;
    flex-direction: column;
    padding-left: 12px;
    border-right: 1px solid #b1b1b1;
}

.clipboard {
    width: 138px;
}

.font {
    width: 370px;
}

.align {
    width: 357px;
}

.number {
    width: 212px;
}

.styles {
    width: 292px;
}

.cells {
    width: 210px;
}

.editing {
    width: 270px;
}

.group-body {
    display: flex;
    flex: 1;
}

.rows {
    display: flex;
    flex-direction: column;
    gap: 11px;
    padding-top: 11px;
}

.row {
    display: flex;
    align-items: center;
    height: 35px;
}

.group-label {
    position: relative;
    flex: none;
    margin-left: -12px;
    height: 16px;
    line-height: 18px;
    text-align: center;
}

.clipboard .group-label, .font .group-label, .align .group-label, .number .group-label {
    padding-right: 26px;
}

.launcher {
    position: absolute;
    right: 5px;
    bottom: 1px;
}

.tool, .more {
    position: relative;
    display: flex;
    flex: none;
    justify-content: center;
    align-items: center;
    width: 32px;
    height: 34px;
    color: #555;
}

.more {
    width: 20px;
}

.tool.on {
    background-color: #c6c6c6;
    border: 1px solid #808080;
}

.sep {
    flex: none;
    width: 1px;
    height: 32px;
    margin: 0 4px 0 3px;
    background-color: #d0d0d0;
}

.sep.tall {
    height: 86px;
    margin: 9px 8px 0 7px;
}

.combo {
    position: relative;
    display: flex;
    align-items: center;
    height: 35px;
    background-color: #fff;
    border: 1px solid #999;
}

.combo select {
    flex: 1;
    min-width: 0;
    height: 100%;
    padding-left: 2px;
    appearance: none;
}

.combo .caret {
    margin: 0 7px;
}

.family {
    width: 225px;
}

.size {
    width: 58px;
    margin-left: -1px;
    font-size: 20px;
}

.format {
    width: 189px;
}

.size .caret {
    margin-left: 0;
}

.bold {
    font-size: 21px;
    font-weight: bold;
}

.italic {
    font: italic bold 23px "Liberation Serif", serif;
}

.underline {
    font-size: 20px;
    font-weight: 600;
    text-decoration: underline;
}

.grow, .shrink {
    font-size: 24px;
    font-weight: 600;
    margin-right: 4px;
}

.shrink {
    font-size: 20px;
    margin-top: 2px;
    margin-right: 6px;
}

.mark {
    position: absolute;
    top: 5px;
    right: 5px;
    border: 4px solid transparent;
}

.mark.up {
    border-bottom-color: #4a80b9;
    border-top: 0;
}

.mark.down {
    border-top-color: #4a80b9;
    border-bottom: 0;
}

.color {
    height: 24px;
    width: 24px;
    margin: 0 4px;
    font-size: 22px;
    font-weight: 600;
    line-height: 16px;
    padding-bottom: 3px;
    border-bottom: 6px solid #f00;
}

.phonetic {
    flex-direction: column;
    font-size: 12px;
    line-height: 11px;
}

.phonetic b {
    color: #4a80b9;
    font-size: 15px;
    font-weight: 500;
    line-height: 15px;
}

.percent {
    font-size: 23px;
}

.icon-text {
    fill: #555;
    font-size: 14px;
}

.icon-text.small {
    font-size: 12px;
}

.sort-a, .sort-z {
    fill: #4a80b9;
    font-size: 24px;
    font-weight: 500;
}

.sort-z {
    fill: #9566b5;
}

.text-tool {
    display: flex;
    align-items: center;
    gap: 4px;
    padding-left: 2px;
}

.text-tool + .more {
    margin-left: 8px;
}

.stack {
    display: flex;
    flex-direction: column;
}

.stack > div {
    display: flex;
}

.big {
    display: flex;
    flex-direction: column;
    align-items: center;
    padding-top: 2px;
    line-height: 23px;
    white-space: nowrap;
}

.big > .caret {
    margin-top: 11px;
}

.big svg {
    margin-bottom: 4px;
}

.clipboard .group-body {
    padding-left: 10px;
}

.clipboard .stack {
    padding-left: 7px;
}

.styles .group-body {
    gap: 15px;
    padding-left: 3px;
}

.table-style .caret {
    margin: 0 -14px 4px 6px;
}

.cells .big {
    width: 62px;
}

.editing {
    padding-left: 11px;
}

.editing .stack .tool, .editing .stack .more {
    height: 33px;
}

.editing .big {
    width: 97px;
}

.collapse {
    margin-left: auto;
    margin-right: 12px;
    align-self: flex-end;
}

/*Formula bar*/
.formula-bar {
    display: flex;
    flex: none;
    gap: 4px;
    height: 67px;
    padding: 15px 7px;
    color: #444;
    font-size: 20px;
}

.name-box, .formula-buttons, .formula-input {
    display: flex;
    align-items: center;
    background-color: #fdfdfd;
    border: 1px solid #c3c3c3;
}

.name-box {
    width: 152px;
    padding: 0 10px 0 6px;
}

.name-box input, .formula-input input {
    flex: 1;
    min-width: 0;
    height: 100%;
}

.grip {
    width: 37px;
    margin: 10px 0;
    background: repeating-linear-gradient(#aaa 0 3px, transparent 3px 6px) center / 3px 15px no-repeat;
}

.formula-buttons {
    width: 164px;
    justify-content: space-around;
}

.fx {
    color: #666;
    font: italic bold 26px "Liberation Serif", serif;
    line-height: 30px;
}

.fx sub {
    font-size: 19px;
    line-height: 10px;
    vertical-align: baseline;
}

.formula-input {
    flex: 1;
    padding: 0 7px 0 16px;
}

/*The sheet itself. Rows are filled in by the script,
the selection frame sits on top of row 7*/
.sheet {
    position: relative;
    flex: 1;
    min-height: 0;
    overflow: hidden;
    background-color: #fff;
}

.grid {
    table-layout: fixed;
    width: 1967px;
    border-collapse: separate;
    border-spacing: 0;
    color: #000;
    font-family: "Noto Sans CJK SC", sans-serif;
    font-size: 22px;
    font-weight: 300;
}

.col-head {
    width: 43px;
}

.col-b {
    width: 121px;
}

.col-e {
    width: 139px;
}

.grid th, .grid td {
    height: 28px;
    padding: 0;
    border-right: 1px solid #d4d4d4;
    border-bottom: 1px solid #d4d4d4;
    line-height: 27px;
    text-align: center;
    white-space: nowrap;
}

.grid th {
    background-color: #e6e6e6;
    border-color: #b4b4b4;
    color: #333;
    font-size: 21px;
    font-weight: 300;
}

.grid thead th {
    padding-top: 2px;
    background-color: #d2d2d2;
    border-bottom: 2px solid #217346;
    color: #217346;
    font-size: 20px;
    line-height: 24px;
}

.grid thead .corner {
    background: linear-gradient(to bottom right, transparent 50%, #b4b4b4 50%) 19px 5px / 20px 19px no-repeat #e6e6e6;
    border-bottom: 1px solid #b4b4b4;
}

.grid .boxed {
    border-color: #000;
}

.grid .strong {
    font-size: 21px;
    font-weight: bold;
}

.grid .yellow {
    background-color: #ff0;
}

.grid .yellow:not(.boxed), .grid .plain-right {
    border-color: #ff0;
}

.grid .plain-right {
    border-bottom-color: #d4d4d4;
}

.grid .picked td {
    background-color: #c70000;
}

.grid .picked td:not(.boxed) {
    border-color: #c70000;
}

.grid .picked td.active {
    background-color: #f00;
}

.grid .picked td.yellow {
    background-color: #c7c700;
}

.grid .picked th {
    background-color: #9fd5b7;
    color: #217346;
}

.selection {
    position: absolute;
    top: 194px;
    left: 42px;
    right: -4px;
    height: 31px;
    border: 2px solid #217346;
    box-shadow: inset 0 0 0 1px #fff;
}

.selection:after {
    content: "";
    position: absolute;
    left: -2px;
    bottom: -2px;
    width: 6px;
    height: 6px;
    background-color: #217346;
}

.meter {
    position: absolute;
    right: 0;
    top: 389px;
    width: 15px;
    padding: 9px 2px 9px 5px;
    background-color: #545968;
    border: 1px solid #3d404a;
    border-right: 0;
    border-radius: 5px 0 0 5px;
}

.meter i {
    display: block;
    height: 31px;
    background: repeating-linear-gradient(#33363f 0 2px, transparent 2px 3px);
}

.meter .level {
    height: 39px;
    background: repeating-linear-gradient(transparent 0 2px, #545968 2px 3px), linear-gradient(#d3cf4a, #8ccb6c 50%, #45d0c0);
}

/*Sheet tabs*/
.sheet-tabs {
    display: flex;
    flex: none;
    align-items: flex-start;
    height: 33px;
    padding-left: 29px;
    border-top: 1px solid #999;
}

.nav {
    align-self: center;
    margin-right: 28px;
    border: 7px solid transparent;
}

.prev {
    border-right: 6px solid #bbb;
    border-left: 0;
}

.next {
    margin-right: 46px;
    border-left: 6px solid #bbb;
    border-right: 0;
}

.sheet-tab {
    height: 30px;
    margin-top: -1px;
    padding: 0 15px;
    background-color: #fff;
    border: 1px solid #999;
    border-top: 0;
    border-bottom: 2px solid #217346;
    color: #217346;
    font-size: 19px;
    line-height: 26px;
}

.add {
    align-self: center;
    margin-left: 37px;
}

/*Status bar*/
.status-bar {
    display: flex;
    flex: none;
    align-items: center;
    height: 33px;
    padding-left: 11px;
    background-color: #f3f3f3;
    border-top: 1px solid #c6c6c6;
}

.macro {
    margin-left: 27px;
}

.totals {
    display: flex;
    gap: 22px;
    margin-left: auto;
}

.views {
    display: flex;
    align-self: stretch;
    margin-left: 28px;
}

.views button {
    display: flex;
    justify-content: center;
    align-items: center;
    width: 60px;
}

.views .on {
    background-color: #c6c6c6;
}

.zoom {
    display: flex;
    align-items: center;
    gap: 8px;
    margin-left: 8px;
    padding-right: 11px;
}

.zoom input {
    width: 148px;
    height: 20px;
    appearance: none;
    background: linear-gradient(#a0a0a0, #a0a0a0) center / 100% 2px no-repeat;
}

.zoom input::-webkit-slider-thumb {
    appearance: none;
    width: 8px;
    height: 16px;
    background-color: #666;
}

.zoom span {
    margin-left: 13px;
}

/*Windows taskbar*/
.taskbar {
    position: relative;
    display: flex;
    flex: none;
    align-items: center;
    height: 60px;
    padding-left: 7px;
    background-color: #1d2325;
}

.taskbar button {
    display: flex;
    justify-content: center;
    align-items: center;
    width: 72px;
    height: 60px;
}

.taskbar .start {
    width: 58px;
    margin-right: 7px;
}

.divider {
    width: 4px;
    height: 36px;
    margin: 0 18px 0 8px;
    border: solid #4a4f51;
    border-width: 0 1px;
}

.taskbar .app {
    width: 61px;
    margin: 0 7px;
}

.taskbar .app.open {
    border-bottom: 3px solid #76b9ed;
    padding-top: 3px;
}

.taskbar .app.current {
    width: 73px;
    margin: 0 1px;
    background-color: #4b5052;
}

.tile-text {
    fill: #fff;
    font-size: 15px;
    font-weight: bold;
    text-anchor: middle;
}

.tray {
    display: flex;
    align-items: center;
    gap: 14px;
    margin-left: auto;
    margin-right: 276px;
}

.tray svg:first-child {
    margin-right: 10px;
}

.show-desktop {
    width: 1px;
    height: 60px;
    margin-right: 6px;
    background-color: #777;
}

.mask {
    position: absolute;
    right: 35px;
    bottom: 0;
}

/*Logo overlay*/
.watermark {
    position: absolute;
    right: 100px;
    bottom: 40px;
    pointer-events: none;
}

.logo, .logo-url {
    fill: #fff;
    fill-opacity: 0.85;
    stroke: #999;
    stroke-opacity: 0.4;
    stroke-width: 1px;
    filter: drop-shadow(0 0 1px #aaa);
}

.logo-text, .logo-du {
    font-family: "Liberation Sans", sans-serif;
    font-size: 82px;
    font-weight: bold;
}

.logo-du {
    fill: #d4d4d4;
    fill-opacity: 1;
    font-size: 50px;
}

.logo-cn {
    font-family: "Noto Sans CJK SC", sans-serif;
    font-size: 59px;
    font-weight: 900;
}

.logo-url {
    font-size: 39px;
    font-weight: 500;
}
```

FILE: script.js
```js
/*Fill the sheet with the values below, everything else stays empty*/

const columns = 'ABCDEFGHIJKLMNOPQR'.split('');
const rowCount = 23;
const values = [
    ['序号', '物品', '第一季度', '第二季度', '汇总'],
    ['1', '签字笔', '100支', '80支', '180'],
    ['2', '中性笔', '200支', '150支', '181'],
    ['3', '日志本', '80本', '80本', '182'],
    ['4', '会议记录本', '50本', '50本', '183'],
    ['5', '标签', '300个', '150个', '185'],
    ['6', '夹子', '100个', '100个', ''],
    ['7', '涂改液', '20个', '20个', ''],
    ['8', '红笔', '10支', '15支', ''],
    ['9'],
    ['10'],
    ['11']
];

function cellClass(row, col) {
    const names = [];
    if (values[row] && col < values[row].length) names.push('boxed');
    if (row === 0 || col === 0) names.push('strong');
    if (col === 2) names.push('yellow');
    if (col === 1 && row > 8) names.push('plain-right');
    if (row === 6 && col === 0) names.push('active');
    return names.join(' ');
}

let html = '<thead><tr><th class="corner"></th>';
for (const name of columns) {
    html += '<th>' + name + '</th>';
}
html += '</tr></thead><tbody>';

for (let row = 0; row < rowCount; row++) {
    /*the last row is only a sliver, its number is below the edge*/
    const number = row < 22 ? row + 1 : '';
    html += '<tr' + (row === 6 ? ' class="picked"' : '') + '><th>' + number + '</th>';
    for (let col = 0; col < columns.length; col++) {
        const text = values[row] && values[row][col] ? values[row][col] : '';
        html += '<td class="' + cellClass(row, col) + '">' + text + '</td>';
    }
    html += '</tr>';
}

document.getElementById('grid').insertAdjacentHTML('beforeend', html + '</tbody>');
```
